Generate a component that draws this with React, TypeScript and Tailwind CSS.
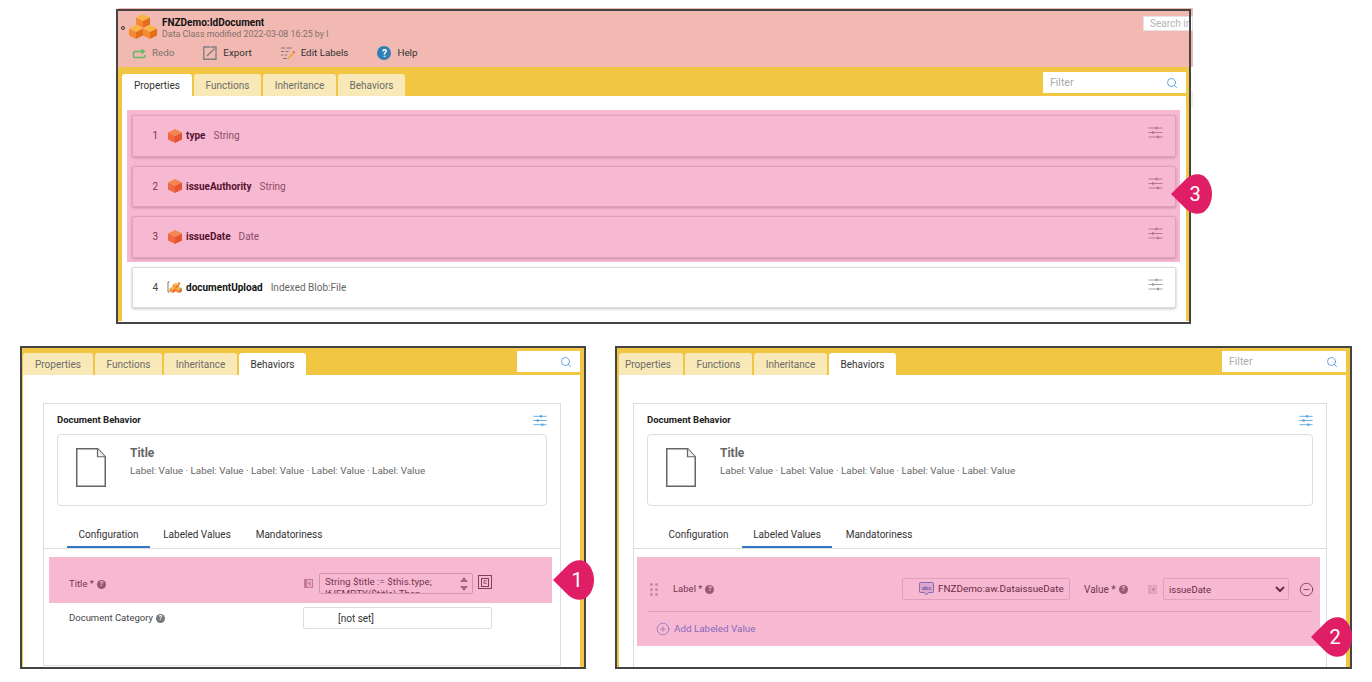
import { Search, CirclePlus, CircleMinus } from "lucide-react";
import type { ReactNode } from "react";

const TAB_NAMES = ["Properties", "Functions", "Inheritance", "Behaviors"];
const TAB_WIDTHS = ["w-[70px]", "w-[67px]", "w-[73px]", "w-[67px]"];

function Cube({ x = 0, y = 0 }: { x?: number; y?: number }) {
  return (
    <g transform={`translate(${x} ${y})`}>
      <polygon points="7,0 14,3.5 7,7 0,3.5" fill="#f8b545" />
      <polygon points="0,3.5 7,7 7,14 0,10.5" fill="#f58a32" />
      <polygon points="14,3.5 7,7 7,14 14,10.5" fill="#e56e1c" />
    </g>
  );
}

function CubeIcon() {
  return (
    <svg width="14" height="14" viewBox="0 0 14 14" className="shrink-0">
      <Cube />
    </svg>
  );
}

function StackIcon() {
  return (
    <svg width="28" height="27" viewBox="0 0 28 27" className="shrink-0">
      <Cube x={7} y={0} />
      <Cube x={0} y={11} />
      <Cube x={14} y={11} />
    </svg>
  );
}

function BlobIcon() {
  return (
    <svg width="15" height="14" viewBox="0 0 15 14" className="shrink-0">
      <path d="M2.5 2H1v10h1.5M12.5 12H14V8" fill="none" stroke="#777" strokeWidth="1" />
      <g transform="translate(2.5 3) scale(0.45)">
        <Cube x={7} y={0} />
        <Cube x={0} y={8} />
        <Cube x={13} y={8} />
      </g>
      <path d="M12 1.5l.6 1.2 1.2.2-.9.8.2 1.3-1.1-.6-1.1.6.2-1.3-.9-.8 1.2-.2z" fill="#e9862a" />
    </svg>
  );
}

function SlidersIcon({ color = "#9a9a9a", w = 15 }: { color?: string; w?: number }) {
  return (
    <svg width={w} height="13" viewBox="0 0 15 13" className="shrink-0">
      <g stroke={color} strokeWidth="0.9" fill={color}>
        <path d="M0.5 2h14M0.5 6.5h14M0.5 11h14" fill="none" />
        <rect x="7.5" y="0.8" width="2" height="2.4" strokeWidth="0" />
        <rect x="4" y="5.3" width="2" height="2.4" strokeWidth="0" />
        <rect x="9" y="9.8" width="2" height="2.4" strokeWidth="0" />
      </g>
    </svg>
  );
}

function RedoIcon() {
  return (
    <svg width="14" height="11" viewBox="0 0 14 11" className="shrink-0">
      <path d="M13 7v1a1.5 1.5 0 0 1-1.5 1.5H3A1.5 1.5 0 0 1 1.5 8V5A1.5 1.5 0 0 1 3 3.5h8" fill="none" stroke="#5dbb63" strokeWidth="1.5" />
      <path d="M9.5 0.5l4 3-4 3z" fill="#5dbb63" />
    </svg>
  );
}

function ExportIcon() {
  return (
    <svg width="14" height="14" viewBox="0 0 14 14" className="shrink-0">
      <path d="M7 1H.8v12.2H13V7" fill="none" stroke="#808080" strokeWidth="1.4" />
      <path d="M4 10l7.5-7.5M7.5 1h5.5v5.5" fill="none" stroke="#808080" strokeWidth="1.4" />
    </svg>
  );
}

function EditLabelsIcon() {
  return (
    <svg width="14" height="13" viewBox="0 0 14 13" className="shrink-0">
      <path d="M0 1h4M5.5 1h5M0 4.5h3M4.5 4.5h3M0 8h2.5M4 8h2M2 11.5h4" stroke="#777" strokeWidth="1.2" />
      <path d="M6.5 11.5l6-7 1.2 1-6 7z" fill="#e9a93a" />
      <path d="M11.8 5.2l1-1.2 1.2 1-1 1.2z" fill="#d9534f" />
    </svg>
  );
}

function FieldMark({ tone = "#b9a0ad" }: { tone?: string }) {
  return (
    <svg width="9" height="9" viewBox="0 0 9 9" className="shrink-0">
      <rect width="9" height="9" fill={tone} />
      <rect x="3" y="1" width="5" height="7" fill="#eee" />
      <path d="M6.5 3L4.5 4.5l2 1.5" stroke="#666" fill="none" strokeWidth="0.8" />
    </svg>
  );
}

function AbcIcon() {
  return (
    <svg width="15" height="14" viewBox="0 0 15 14" className="shrink-0">
      <path d="M1.5.5h12a1 1 0 0 1 1 1v8a1 1 0 0 1-1 1H9.5l-2 2.5-2-2.5h-4a1 1 0 0 1-1-1v-8a1 1 0 0 1 1-1z" fill="#dbe7f7" stroke="#5f8fd0" />
      <text x="7.5" y="7.6" textAnchor="middle" fontSize="6" fontWeight="700" fill="#4f7fc4">
        abc
      </text>
    </svg>
  );
}

function DocIcon() {
  return (
    <svg width="30" height="39" viewBox="0 0 30 39" className="shrink-0">
      <path d="M.75.75h21l7.5 8v29.5H.75z" fill="#fff" stroke="#666" strokeWidth="1.5" />
      <path d="M21.5.75v8h7.5" fill="#eee" stroke="#666" strokeWidth="1.2" />
    </svg>
  );
}

function HelpDot() {
  return (
    <span className="flex h-[9px] w-[9px] items-center justify-center rounded-full bg-[#777] text-[7px] font-bold leading-none text-white">
      ?
    </span>
  );
}

function Badge({ n, className }: { n: number; className: string }) {
  return (
    <div className={`absolute h-[40px] w-[41px] ${className}`}>
      <svg width="41" height="40" viewBox="0 0 41 40">
        <path d="M0 20L15 5C20 0 28-1 33 2c5 4 8 11 8 18s-3 14-8 18c-5 3-13 2-18-3z" fill="#e01e66" />
      </svg>
      <span className="absolute inset-0 flex items-center justify-center pl-[7px] text-[20px] leading-none text-white">
        {n}
      </span>
    </div>
  );
}

function Tabs({ active, widths = TAB_WIDTHS }: { active: string; widths?: string[] }) {
  return (
    <div className="flex gap-[2px]">
      {TAB_NAMES.map((name, i) => (
        <div
          key={name}
          className={`flex h-[22px] items-center justify-center rounded-t-[3px] text-[10px] ${widths[i]} ${
            name === active ? "bg-white text-[#333]" : "bg-[#f9e9b8] text-[#6b6b6b]"
          }`}
        >
          {name}
        </div>
      ))}
    </div>
  );
}

function Row({ n, name, type, icon, pink }: { n: number; name: string; type: string; icon: ReactNode; pink?: boolean }) {
  return (
    <div
      className={`flex h-[41.5px] items-center rounded-[2px] border border-[#ddd] bg-white pr-[12px] shadow-[0_1px_3px_rgba(0,0,0,0.25)] ${
        pink ? "ml-[5px] mr-[4px]" : "ml-[10px] mr-[10px]"
      }`}
    >
      <span className="w-[25px] text-right text-[10px] text-[#444]">{n}</span>
      <span className="ml-[9px] flex w-[15px] justify-center">{icon}</span>
      <span className="ml-[4px] text-[10px] font-bold text-[#111]">{name}</span>
      <span className="ml-[8px] text-[10px] text-[#666]">{type}</span>
      <span className="ml-auto -mt-[6px]">
        <SlidersIcon />
      </span>
    </div>
  );
}

function PinkOverlay() {
  return <div className="pointer-events-none absolute inset-0 bg-[#e5186a]/30" />;
}

function BehaviorPanel({
  className,
  filter,
  tabsPad,
  paneClass,
  widths,
  activeSub,
  closed,
  children,
}: {
  className: string;
  filter: ReactNode;
  tabsPad: string;
  paneClass: string;
  widths: string[];
  activeSub: "config" | "labeled";
  closed?: boolean;
  children: ReactNode;
}) {
  return (
    <div className={`absolute top-[346px] flex h-[323px] flex-col border-2 border-[#444] bg-[#f1c643] ${className}`}>
      <div className={`flex h-[27px] shrink-0 items-end justify-between pr-[4px] ${tabsPad}`}>
        <Tabs active="Behaviors" widths={widths} />
        {filter}
      </div>
      <div className={`mr-[4px] flex-1 overflow-hidden bg-white pr-[19px] pt-[28px] ${paneClass}`}>
        <div className={`border border-[#ddd] ${closed ? "h-[263px]" : "h-[280px] border-b-0"}`}>
          <div className="mx-[13px] mt-[10px] flex h-[12px] items-center justify-between">
            <span className="text-[9.5px] font-bold text-[#222]">Document Behavior</span>
            <SlidersIcon color="#4a9fd8" w={14} />
          </div>
          <div className="mx-[13px] mt-[8px] flex h-[72px] gap-[24px] rounded-[4px] border border-[#ddd] pl-[18px] pt-[13px]">
            <DocIcon />
            <div className="-mt-[2px]">
              <div className="text-[12px] font-bold leading-[14px] text-[#666]">Title</div>
              <div className="mt-[5px] text-[9.85px] leading-[12px] text-[#666]">
                Label: Value · Label: Value · Label: Value · Label: Value · Label: Value
              </div>
            </div>
          </div>
          <div className="mt-[20px] flex h-[23px] border-b border-[#ddd] pl-[23px] text-[10px] text-[#333]">
            <div className={`mr-[2px] flex h-[22px] w-[83px] items-start justify-center pt-[1px] ${activeSub === "config" ? "border-b-2 border-[#3478c5]" : ""}`}>
              Configuration
            </div>
            <div className={`flex h-[22px] w-[90px] items-start justify-center pt-[1px] ${activeSub === "labeled" ? "border-b-2 border-[#3478c5]" : ""}`}>
              Labeled Values
            </div>
            <div className="ml-[2px] flex h-[22px] w-[90px] items-start justify-center pt-[1px]">Mandatoriness</div>
          </div>
          {children}
        </div>
      </div>
    </div>
  );
}

function FilterBox({ width, label }: { width: string; label?: string }) {
  return (
    <div className={`mb-[3px] flex h-[21px] items-center justify-between bg-white pl-[7px] pr-[8px] ${width}`}>
      <span className="text-[10.5px] text-[#aaa]">{label}</span>
      <Search size={12} strokeWidth={1.6} className="text-[#3f8fdc]" />
    </div>
  );
}

export default function App() {
  return (
    <div className="relative h-[682px] w-[1372px] overflow-hidden bg-white font-['Roboto',sans-serif]">
      {/* Data class list */}
      <div className="absolute left-[116px] top-[9px] h-[315px] w-[1075px]">
        <div className="-mt-[1px] ml-[2px] flex h-[59px] w-[1075px] flex-col bg-[#f1b9b1] pl-[3px]">
          <div className="flex items-center pt-[6px]">
            <span className="h-[4px] w-[4px] rounded-full border border-[#333]" />
            <span className="ml-[4px]">
              <StackIcon />
            </span>
            <div className="ml-[5px]">
              <div className="text-[10px] font-bold leading-[13px] text-[#111]">FNZDemo:IdDocument</div>
              <div className="text-[8.9px] leading-[11px] text-[#85706c]">Data Class modified 2022-03-08 16:25 by l</div>
            </div>
            <div className="mb-[9px] ml-auto w-[50px] overflow-hidden whitespace-nowrap border border-[#e4e4e4] bg-white pl-[6px] text-[10px] leading-[13px] text-[#b5b5b5]">
              Search in
            </div>
          </div>
          <div className="ml-[11px] mt-[5px] flex items-center text-[9.8px] text-[#333]">
            <span className="flex items-center gap-[6px] text-[#7d7270]">
              <RedoIcon />
              Redo
            </span>
            <span className="ml-[29px] flex items-center gap-[6px]">
              <ExportIcon />
              Export
            </span>
            <span className="ml-[29px] flex items-center gap-[6px]">
              <EditLabelsIcon />
              Edit Labels
            </span>
            <span className="ml-[29px] flex items-center gap-[6px]">
              <span className="flex h-[14px] w-[14px] items-center justify-center rounded-full bg-[#2e7fb3] text-[10px] font-bold text-white">?</span>
              Help
            </span>
          </div>
        </div>
        <div className="mx-[2px] flex h-[254px] flex-col bg-[#f1c643]">
          <div className="flex h-[29px] shrink-0 items-end justify-between pl-[4px] pr-[3px]">
            <Tabs active="Properties" />
            <FilterBox width="w-[143px]" label="Filter" />
          </div>
          <div className="ml-[4px] mr-[3px] flex-1 overflow-hidden bg-white pt-[14px]">
            <div className="relative ml-[5px] mr-[6px] flex flex-col gap-[9px] pb-[4px] pt-[5px]">
              <Row pink n={1} name="type" type="String" icon={<CubeIcon />} />
              <Row pink n={2} name="issueAuthority" type="String" icon={<CubeIcon />} />
              <Row pink n={3} name="issueDate" type="Date" icon={<CubeIcon />} />
              <PinkOverlay />
            </div>
            <div className="mt-[5px]">
              <Row n={4} name="documentUpload" type="Indexed Blob:File" icon={<BlobIcon />} />
            </div>
          </div>
        </div>
        <div className="pointer-events-none absolute inset-0 border-2 border-[#444]" />
      </div>
      <div className="absolute left-[1191px] top-[91px] h-[17px] w-[2px] bg-[#eee]" />

      {/* Configuration tab */}
      <BehaviorPanel
        className="left-[20px] w-[566px]"
        tabsPad="pl-[1px]"
        paneClass="ml-[1px] pl-[20px]"
        widths={TAB_WIDTHS}
        activeSub="config"
        closed
        filter={<FilterBox width="w-[63px]" />}
      >
        <div className="relative ml-[5px] mr-[8px] mt-[8px] flex h-[46px] items-start pl-[20px] pt-[16px]">
          <div className="flex h-[21px] w-[235px] items-center gap-[3px] pt-[1px] text-[9.5px] text-[#444]">
            Title * <HelpDot />
          </div>
          <div className="flex h-[21px] items-center">
            <FieldMark />
            <div className="ml-[6px] flex h-[21px] w-[154px] justify-between overflow-hidden rounded-[2px] border border-[#ccc] bg-white pl-[5px] pr-[4px] pt-[2px] text-[9.75px] leading-[12px] text-[#444]">
              <div className="whitespace-nowrap">
                String $title := $this.type;
                <br />
                If !EMPTY($title) Then
              </div>
              <div className="flex flex-col gap-[4px] pt-[1px] text-[#888]">
                <span className="h-0 w-0 border-x-[4px] border-b-[5px] border-x-transparent border-b-current" />
                <span className="h-0 w-0 border-x-[4px] border-t-[5px] border-x-transparent border-t-current" />
              </div>
            </div>
            <div className="mb-[3px] ml-[5px] flex h-[14px] w-[14px] items-center justify-center border border-[#555] text-[7px] leading-none text-[#333]">
              <span className="border border-[#555] px-[1px]">c</span>
            </div>
          </div>
          <PinkOverlay />
        </div>
        <div className="ml-[25px] mt-[4px] flex items-center text-[9.5px] text-[#444]">
          <div className="flex w-[234px] items-center gap-[3px] pt-[1px]">
            Document Category <HelpDot />
          </div>
          <div className="flex h-[22px] w-[189px] items-center rounded-[2px] border border-[#ddd] pl-[34px] text-[10px] text-[#333]">
            [not set]
          </div>
        </div>
      </BehaviorPanel>

      {/* Labeled values tab */}
      <BehaviorPanel
        className="left-[615px] w-[737px]"
        tabsPad="pl-[2px]"
        paneClass="ml-[2px] pl-[14px]"
        widths={["w-[64px] pr-[6px]", "w-[67px]", "w-[73px]", "w-[67px]"]}
        activeSub="labeled"
        filter={<FilterBox width="w-[124px]" label="Filter" />}
      >
        <div className="relative ml-[3px] mr-[6px] mt-[8px] h-[89px] pt-[21px]">
          <div className="flex h-[22px] items-center pl-[13px] text-[9.5px] text-[#444]">
            <div className="grid grid-cols-2 gap-[2px]">
              {[0, 1, 2, 3, 4, 5].map((d) => (
                <span key={d} className="h-[3px] w-[3px] rounded-full bg-[#bbb]" />
              ))}
            </div>
            <div className="ml-[15px] flex w-[229px] items-center gap-[3px]">
              Label * <HelpDot />
            </div>
            <div className="flex h-[22px] w-[168px] items-center gap-[4px] rounded-[2px] border border-[#ddd] pl-[16px] text-[9.9px] text-[#333]">
              <AbcIcon />
              FNZDemo:aw.DataissueDate
            </div>
            <div className="ml-[14px] flex w-[64px] items-center gap-[3px] text-[10px]">
              Value * <HelpDot />
            </div>
            <FieldMark tone="#ddd" />
            <select
              defaultValue="issueDate"
              className="ml-[6px] h-[22px] w-[126px] rounded-[2px] border border-[#ddd] bg-white pl-[1px] text-[9.5px] text-[#333]"
            >
              <option>issueDate</option>
            </select>
            <CircleMinus size={15} strokeWidth={1.2} className="ml-[10px] text-[#333]" />
          </div>
          <div className="ml-[10px] mr-[7px] mt-[11px] border-t border-[#ddd]" />
          <div className="ml-[19px] mt-[10px] flex items-center gap-[4px] text-[9.85px] text-[#5b8fdc]">
            <CirclePlus size={14} strokeWidth={1.2} />
            Add Labeled Value
          </div>
          <PinkOverlay />
        </div>
      </BehaviorPanel>

      <Badge n={3} className="left-[1171px] top-[174px]" />
      <Badge n={1} className="left-[553px] top-[560px]" />
      <Badge n={2} className="left-[1311px] top-[617px]" />
    </div>
  );
}
